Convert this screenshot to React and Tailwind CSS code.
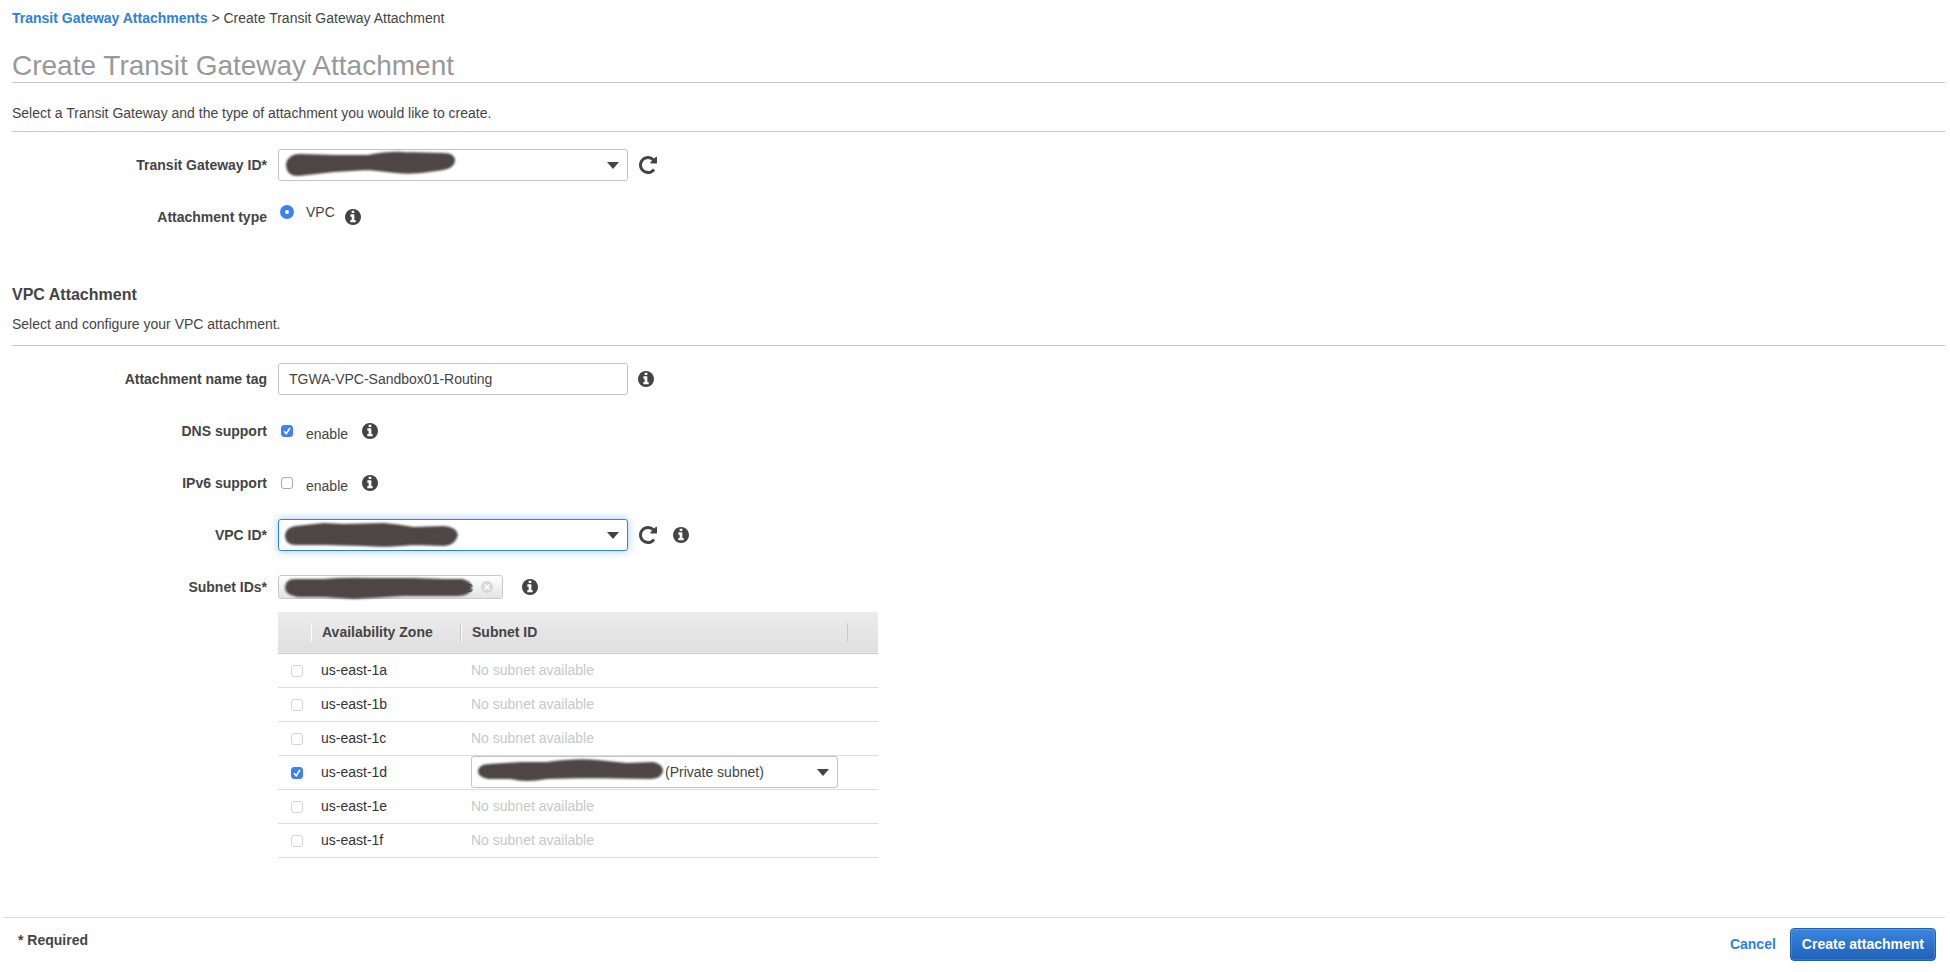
import { useState } from "react";
import { clsx } from "clsx";

const LABEL_CLS = "w-[255px] shrink-0 text-right font-bold";

const FIELD_CLS =
  "h-8 w-full appearance-none rounded-[3px] border bg-white text-sm text-[#444] outline-none";

const CHECKBOX_CLS =
  "block size-3 appearance-none rounded-[3px] border border-[#a9a9a9] bg-white checked:border-[#3f80f7] checked:bg-[#3f80f7] disabled:border-[#d4d4d4]";

/** Hand-drawn strokes that hide account specific ids */
const SCRIBBLES = {
  gateway: {
    width: 172,
    path: "M3 15 Q5 6 16 6 L50 7 L84 7 Q104 3 120 4 L160 5 Q170 5 170 12 Q169 20 152 21 Q130 25 112 23 L84 20 L50 22 L14 26 Q3 26 3 15 Z",
  },
  vpc: {
    width: 175,
    path: "M2 16 Q3 9 12 8 L40 5 L60 6 L100 5 Q112 6 130 9 L160 8 Q172 9 173 16 Q170 26 160 26 L130 25 Q100 28 80 26 L40 25 L12 25 Q2 25 2 16 Z",
  },
  chip: {
    width: 190,
    path: "M2 16 Q2 8 11 8 L40 8 Q60 6 90 7 L130 7 L160 8 L178 8 Q187 10 187 16 Q185 23 174 23 L120 23 L70 26 L40 24 L14 24 Q2 22 2 16 Z",
  },
  subnet: {
    width: 186,
    path: "M2 15 Q3 9 12 9 L45 7 L70 7 Q100 3 120 5 L150 8 L176 7 Q185 9 185 15 Q184 21 174 22 L110 21 L70 22 Q48 26 34 22 L12 22 Q2 21 2 15 Z",
  },
};

function Scribble({ name, className }) {
  const { width, path } = SCRIBBLES[name];
  return (
    <svg
      width={width}
      height="32"
      viewBox={`0 0 ${width} 32`}
      className={clsx(
        "pointer-events-none overflow-visible blur-[1px]",
        className,
      )}
      aria-hidden="true"
    >
      <path d={path} fill="#4e4545" stroke="#4e4545" strokeWidth="2" />
    </svg>
  );
}

function InfoIcon() {
  return (
    <svg width="16" height="16" viewBox="0 0 1536 1536" aria-hidden="true">
      <path
        fill="#444"
        d="M1024 1248v-160q0-14-9-23t-23-9h-96V544q0-14-9-23t-23-9H544q-14 0-23 9t-9 23v160q0 14 9 23t23 9h96v320h-96q-14 0-23 9t-9 23v160q0 14 9 23t23 9h448q14 0 23-9t9-23zM896 352V192q0-14-9-23t-23-9H672q-14 0-23 9t-9 23v160q0 14 9 23t23 9h192q14 0 23-9t9-23zm640 416q0 209-103 385.500T1153.500 1433 768 1536t-385.500-103T103 1153.500 0 768t103-385.500T382.500 103 768 0t385.500 103T1433 382.500 1536 768z"
      />
    </svg>
  );
}

function InfoButton({ label }) {
  return (
    <button type="button" aria-label={label} className="cursor-pointer">
      <InfoIcon />
    </button>
  );
}

function RefreshButton({ label }) {
  return (
    <button type="button" aria-label={label} className="ml-[11px] cursor-pointer">
      <svg width="18" height="18" viewBox="128 128 1536 1536" aria-hidden="true">
        <path
          fill="#444"
          d="M1664 256v448q0 26-19 45t-45 19h-448q-42 0-59-40-17-39 14-69l138-138q-148-137-349-137-104 0-198.500 40.500t-163.500 109.500-109.500 163.500-40.500 198.500 40.500 198.500 109.500 163.500 163.500 109.500 198.500 40.500q119 0 225-52t179-147q7-10 23-12 15 0 25 9l137 138q9 8 9.500 20.500t-7.500 22.500q-109 132-264 204.500t-327 72.500q-156 0-298-61t-245-164-164-245-61-298 61-298 164-245 245-164 298-61q147 0 284.500 55.500t244.500 156.500l130-129q29-31 70-14 39 17 39 59z"
        />
      </svg>
    </button>
  );
}

/** Select box with its own caret and a stroke over the chosen id */
function RedactedSelect({ scribble, focused, text = "", className, ...props }) {
  return (
    <div className={clsx("relative", className)}>
      <select
        className={clsx(
          FIELD_CLS,
          "pl-[193px]",
          focused
            ? "border-[#3184e4] shadow-[0_0_8px_rgba(49,132,228,0.45)]"
            : "border-[#c4c4c4]",
        )}
        {...props}
      >
        <option>{text}</option>
      </select>
      <Scribble name={scribble} className="absolute top-0 left-[6px]" />
      <svg
        width="12"
        height="7"
        viewBox="0 0 12 7"
        className="pointer-events-none absolute top-[13px] right-[9px]"
        aria-hidden="true"
      >
        <path d="M0 0h12L6 7z" fill="#444" />
      </svg>
    </div>
  );
}

function Checkbox({ className, ...props }) {
  return (
    <span className={clsx("relative inline-block size-3", className)}>
      <input type="checkbox" className={clsx("peer", CHECKBOX_CLS)} {...props} />
      <svg
        width="12"
        height="12"
        viewBox="0 0 12 12"
        className="pointer-events-none absolute inset-0 hidden peer-checked:block"
        aria-hidden="true"
      >
        <path d="M3 6.300l2.200 2.500L9 3" fill="none" stroke="#fff" strokeWidth="1.600" />
      </svg>
    </span>
  );
}

/** One 52px high line of the form, label on the left */
function Row({ label, htmlFor, children }) {
  return (
    <div className="flex h-[52px] items-center">
      <label htmlFor={htmlFor} className={LABEL_CLS}>
        {label}
      </label>
      <div className="ml-[11px] flex items-center">{children}</div>
    </div>
  );
}

function EnableRow({ id, label, checked, onChange }) {
  return (
    <Row label={label} htmlFor={id}>
      <Checkbox id={id} checked={checked} onChange={onChange} className="ml-[3px]" />
      <label htmlFor={id} className="mr-[14px] ml-[13px] pt-[6px]">
        enable
      </label>
      <InfoButton label={`About ${label}`} />
    </Row>
  );
}

const ZONES = [
  { name: "us-east-1a" },
  { name: "us-east-1b" },
  { name: "us-east-1c" },
  { name: "us-east-1d", subnet: "(Private subnet)" },
  { name: "us-east-1e" },
  { name: "us-east-1f" },
];

function SubnetTable() {
  const [picked, setPicked] = useState(true);

  return (
    <table className="w-[600px] table-fixed border-collapse text-left">
      <colgroup>
        <col className="w-[34px]" />
        <col className="w-[149px]" />
        <col />
        <col className="w-[30px]" />
      </colgroup>
      <thead>
        <tr className="h-[41px] border-b border-[#c8c8c8] bg-linear-to-b from-[#ececec] to-[#dfdfdf]">
          <th className="p-0">
            <div className="h-[19px] border-r border-white" />
          </th>
          <th className="p-0">
            <div className="flex h-[19px] items-center border-r border-[#c8c8c8] pl-[10px]">
              Availability Zone
            </div>
          </th>
          <th className="p-0">
            <div className="flex h-[19px] items-center border-r border-l border-r-[#c8c8c8] border-l-white pl-[10px]">
              Subnet ID
            </div>
          </th>
          <th className="p-0" />
        </tr>
      </thead>
      <tbody>
        {ZONES.map(({ name, subnet }) => (
          <tr key={name} className="h-[34px] border-b border-[#dcdcdc]">
            <td className="p-0 pl-[13px]">
              <div className="flex pt-[2px]">
                <Checkbox
                  aria-label={name}
                  disabled={!subnet}
                  checked={Boolean(subnet) && picked}
                  onChange={(e) => setPicked(e.target.checked)}
                />
              </div>
            </td>
            <td className="p-0 pl-[9px] text-[#333]">{name}</td>
            <td className="p-0 pl-[10px]">
              {subnet ? (
                <RedactedSelect
                  scribble="subnet"
                  text={subnet}
                  aria-label={`Subnet in ${name}`}
                  className="w-[367px]"
                />
              ) : (
                <span className="text-[#c8c8c8]">No subnet available</span>
              )}
            </td>
            <td className="p-0" />
          </tr>
        ))}
      </tbody>
    </table>
  );
}

export default function App() {
  const [nameTag, setNameTag] = useState("TGWA-VPC-Sandbox01-Routing");
  const [dns, setDns] = useState(true);
  const [ipv6, setIpv6] = useState(false);

  return (
    <div className="bg-white pr-[5px] font-['Liberation_Sans',Arial,sans-serif] text-sm leading-5 text-[#444]">
      <main className="pt-2 pl-3">
        <nav>
          <a href="#attachments" className="font-bold text-[#2f80d8]">
            Transit Gateway Attachments
          </a>{" "}
          &gt; Create Transit Gateway Attachment
        </nav>

        <h1 className="mt-[21px] border-b border-[#c8c8c8] text-[28px] leading-[33px] text-[#999]">
          Create Transit Gateway Attachment
        </h1>
        <p className="mt-5 border-b border-[#c8c8c8] pb-2">
          Select a Transit Gateway and the type of attachment you would like to
          create.
        </p>

        <div className="mt-[7px]">
          <Row label="Transit Gateway ID*" htmlFor="gateway">
            <RedactedSelect id="gateway" scribble="gateway" className="w-[350px]" />
            <RefreshButton label="Refresh transit gateways" />
          </Row>
          <Row label="Attachment type">
            <input
              type="radio"
              id="type-vpc"
              name="type"
              defaultChecked
              className="mb-[10px] ml-[2px] size-[14px] appearance-none rounded-full border border-[#a9a9a9] bg-white checked:border-[5px] checked:border-[#3f80f7]"
            />
            <label htmlFor="type-vpc" className="mr-[10px] mb-[10px] ml-3">
              VPC
            </label>
            <InfoButton label="About attachment type" />
          </Row>
        </div>

        <h2 className="mt-10 text-base leading-6 font-bold">VPC Attachment</h2>
        <p className="mt-[7px] border-b border-[#c8c8c8] pb-[11px]">
          Select and configure your VPC attachment.
        </p>

        <div className="mt-[7px]">
          <Row label="Attachment name tag" htmlFor="name-tag">
            <input
              id="name-tag"
              type="text"
              value={nameTag}
              onChange={(e) => setNameTag(e.target.value)}
              className={clsx(FIELD_CLS, "mr-[10px] min-w-[350px] border-[#c4c4c4] px-[10px]")}
            />
            <InfoButton label="About name tag" />
          </Row>
          <EnableRow
            id="dns"
            label="DNS support"
            checked={dns}
            onChange={(e) => setDns(e.target.checked)}
          />
          <EnableRow
            id="ipv6"
            label="IPv6 support"
            checked={ipv6}
            onChange={(e) => setIpv6(e.target.checked)}
          />
          <Row label="VPC ID*" htmlFor="vpc">
            <RedactedSelect id="vpc" scribble="vpc" focused className="w-[350px]" />
            <RefreshButton label="Refresh VPCs" />
            <span className="ml-4 flex">
              <InfoButton label="About VPC ID" />
            </span>
          </Row>
          <Row label="Subnet IDs*">
            <div className="relative mr-[19px] flex h-6 w-[225px] items-center justify-end rounded-[3px] border border-[#c8c8c8] bg-linear-to-b from-white to-[#e4e4e4] pr-[9px]">
              <span className="mr-2">c</span>
              <Scribble name="chip" className="absolute -top-1 left-[5px]" />
              <button type="button" aria-label="Remove subnet" className="cursor-pointer">
                <svg width="12" height="12" viewBox="0 0 12 12" aria-hidden="true">
                  <circle cx="6" cy="6" r="6" fill="#d8d8d8" />
                  <path d="M3.500 3.500l5 5m0-5l-5 5" stroke="#fff" strokeWidth="1.500" />
                </svg>
              </button>
            </div>
            <InfoButton label="About subnets" />
          </Row>
          <div className="-mt-px ml-[266px]">
            <SubnetTable />
          </div>
        </div>
      </main>

      <footer className="mt-[59px] ml-[3px] flex items-start justify-between border-t border-[#dcdcdc] pt-[10px] pr-[9px] pl-[15px]">
        <p className="pt-[2px] font-bold">* Required</p>
        <div className="flex items-center gap-[14px] font-bold">
          <a href="#cancel" className="text-[#2f80d8]">
            Cancel
          </a>
          <button
            type="button"
            className="h-[33px] cursor-pointer rounded-[4px] border border-[#1f5eb0] bg-linear-to-b from-[#3a86df] to-[#1f61b8] px-[11px] text-white shadow-[inset_0_0_0_1px_rgba(255,255,255,0.15)]"
          >
            Create attachment
          </button>
        </div>
      </footer>
    </div>
  );
}
